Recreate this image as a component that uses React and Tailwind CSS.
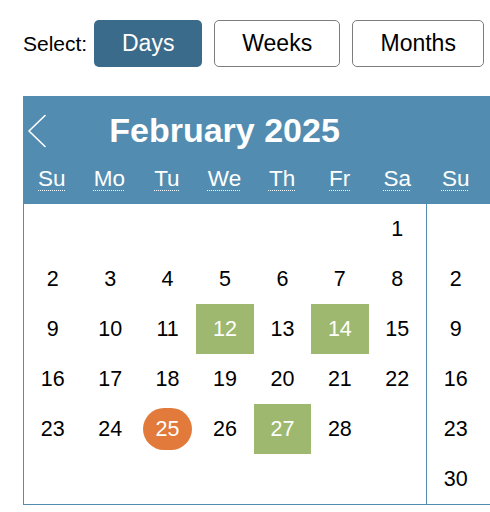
import React, { useState } from "react";

const WEEKDAYS = ["Su", "Mo", "Tu", "We", "Th", "Fr", "Sa"];
const FULL_NAMES = ["Sunday", "Monday", "Tuesday", "Wednesday", "Thursday", "Friday", "Saturday"];
const MONTHS = ["January", "February", "March", "April", "May", "June", "July", "August", "September", "October", "November", "December"];

const buildWeeks = (year, month, rows) => {
  const first = new Date(year, month, 1).getDay();
  const total = new Date(year, month + 1, 0).getDate();
  const cells = [];
  for (let i = 0; i < rows * 7; i++) {
    const d = i - first + 1;
    cells.push(d >= 1 && d <= total ? d : null);
  }
  const weeks = [];
  for (let r = 0; r < rows; r++) weeks.push(cells.slice(r * 7, r * 7 + 7));
  return weeks;
};

const ChevronLeft = () => (
  <svg width="20" height="34" viewBox="0 0 20 34" fill="none">
    <path d="M18 1.5 L2 17 L18 32.5" stroke="white" strokeWidth="1.6" strokeLinecap="round" strokeLinejoin="round" />
  </svg>
);

const Month = ({ year, month, highlighted, today, showPrev, first }) => {
  const weeks = buildWeeks(year, month, 6);

  return (
    <div className="w-[403px] shrink-0 flex flex-col">
      <div className="bg-[#528db1] text-white">
        <div className="relative h-[62px] flex items-center justify-center">
          {showPrev && (
            <button className="absolute left-[4px] top-[18px]" aria-label="Previous month">
              <ChevronLeft />
            </button>
          )}
          <h2 className="text-[34px] font-bold leading-none pt-[6px]">
            {MONTHS[month]} {year}
          </h2>
        </div>
        <div className={`h-[46px] grid grid-cols-7 items-center ${first ? "" : "pl-px"}`}>
          {WEEKDAYS.map((d, i) => (
            <div key={d} className="text-center text-[22.5px] leading-none pb-[3px]">
              <abbr title={FULL_NAMES[i]} className="underline decoration-dotted decoration-1 underline-offset-[4px]">
                {d}
              </abbr>
            </div>
          ))}
        </div>
      </div>

      <div className="border-l border-b border-[#528db1]">
        {weeks.map((week, r) => (
          <div key={r} className="grid grid-cols-7 h-[50px]">
            {week.map((day, c) => {
              const isHighlighted = day && highlighted.includes(day);
              const isToday = day && day === today;
              return (
                <div
                  key={c}
                  className={`flex items-center justify-center text-[21.5px] ${
                    isHighlighted ? "bg-[#9eb96f] text-white" : "text-black"
                  }`}
                >
                  {isToday ? (
                    <span className="w-[49px] h-[42px] rounded-full bg-[#e27a3b] text-white flex items-center justify-center">
                      {day}
                    </span>
                  ) : (
                    day
                  )}
                </div>
              );
            })}
          </div>
        ))}
      </div>
    </div>
  );
};

const App = () => {
  const [mode, setMode] = useState("Days");

  return (
    <div className="w-[490px] h-[512px] overflow-hidden bg-white font-['Liberation_Sans',Arial,sans-serif]">
      <div className="flex items-center pt-[20px] pl-[23px]">
        <span className="text-[21px] mr-[7px]">Select:</span>
        <div className="flex gap-[12px]">
          {[
            ["Days", "w-[108px]"],
            ["Weeks", "w-[126px]"],
            ["Months", "w-[132px]"],
          ].map(([label, w]) => (
            <button
              key={label}
              onClick={() => setMode(label)}
              className={`${w} h-[47px] rounded-[5px] text-[23px] ${
                mode === label
                  ? "bg-[#3a6b8a] text-white"
                  : "bg-white text-black border border-[#7d7d7d]"
              }`}
            >
              {label}
            </button>
          ))}
        </div>
      </div>

      <div className="flex mt-[29px] ml-[23px]">
        <Month year={2025} month={1} highlighted={[12, 14, 27]} today={25} showPrev first />
        <Month year={2025} month={2} highlighted={[]} today={null} />
      </div>
    </div>
  );
};

export default App;
